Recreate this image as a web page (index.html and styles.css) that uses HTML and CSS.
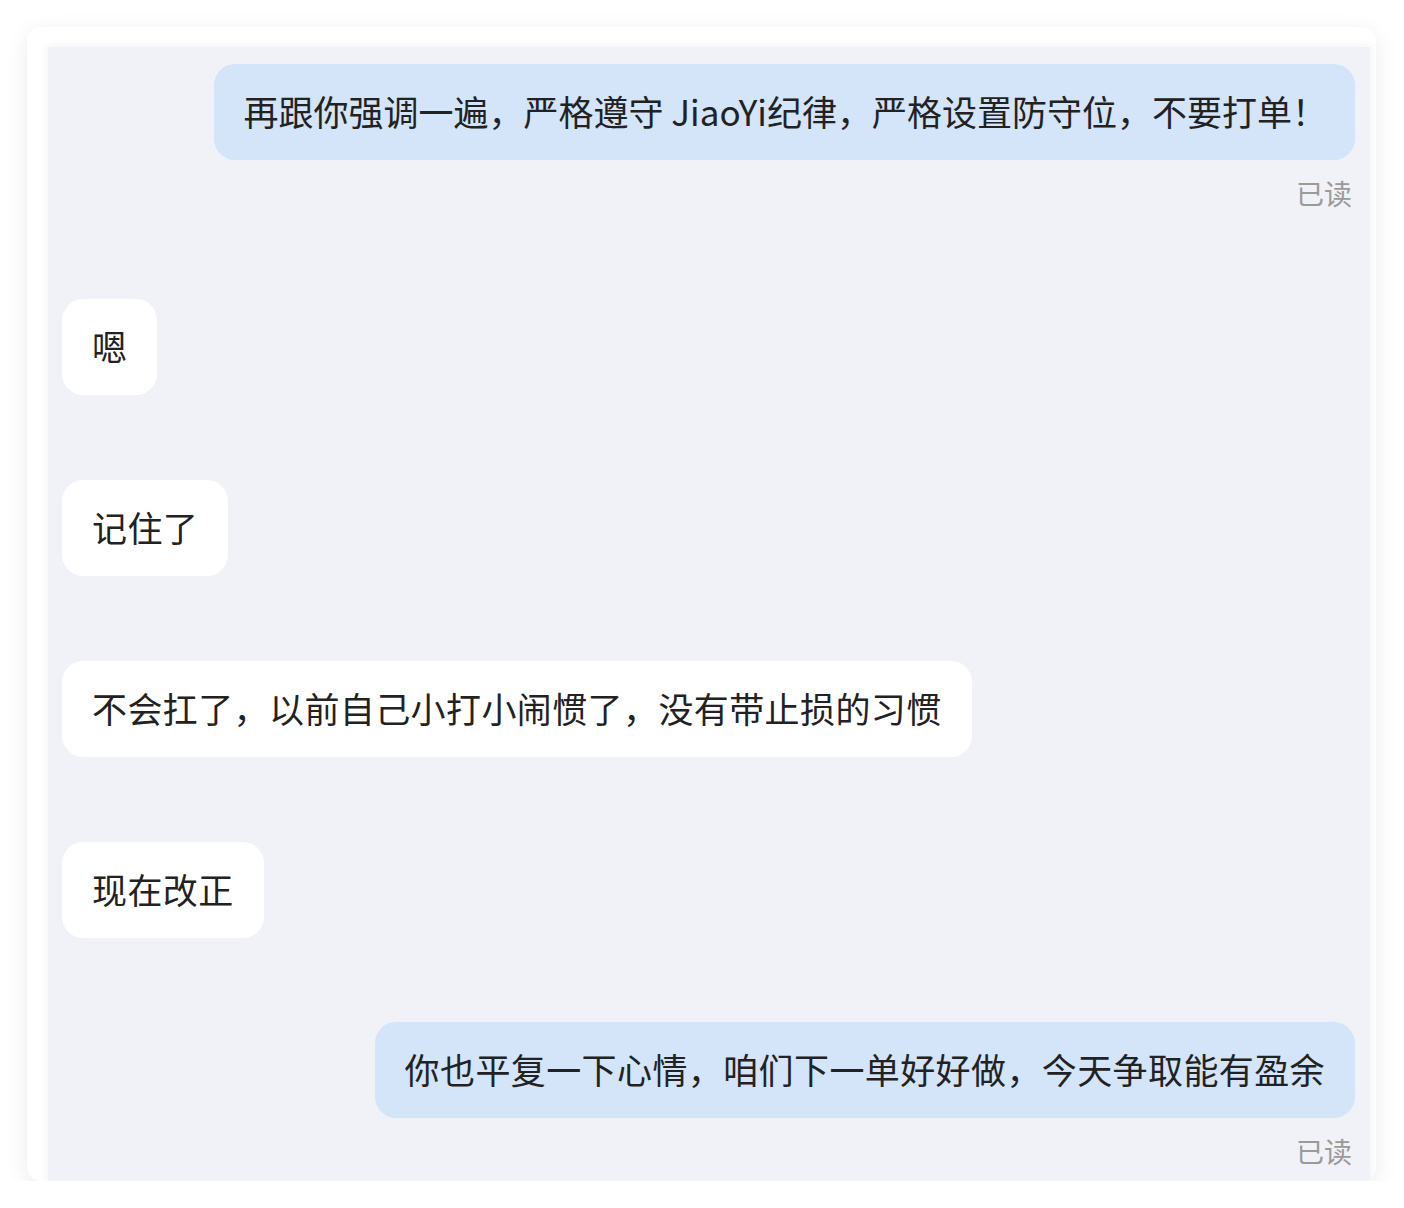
FILE: index.html
```html
<!DOCTYPE html>
<html lang="zh-CN">
<head>
<meta charset="utf-8">
<link rel="stylesheet" href="styles.css">
</head>
<body>
<div class="card">
  <div class="panel">
    <div class="row row-right">
      <div class="bubble bubble-me tight">再跟你强调一遍，严格遵守 JiaoYi纪律，严格设置防守位，不要打单！</div>
    </div>
    <div class="read">已读</div>

    <div class="row row-left first-left">
      <div class="bubble bubble-other">嗯</div>
    </div>
    <div class="row row-left gap">
      <div class="bubble bubble-other">记住了</div>
    </div>
    <div class="row row-left gap">
      <div class="bubble bubble-other">不会扛了，以前自己小打小闹惯了，没有带止损的习惯</div>
    </div>
    <div class="row row-left gap">
      <div class="bubble bubble-other">现在改正</div>
    </div>

    <div class="row row-right gap-last">
      <div class="bubble bubble-me">你也平复一下心情，咱们下一单好好做，今天争取能有盈余</div>
    </div>
    <div class="read">已读</div>
  </div>
</div>
</body>
</html>
```

FILE: styles.css
```css
html, body {
  margin: 0;
  padding: 0;
  background: #ffffff;
}

body {
  font-family: "Noto Sans CJK SC", "Noto Sans", sans-serif;
  color: #222222;
}

.card {
  margin: 27px 0 0 27px;
  width: 1349px;
  height: 1154px;
  box-sizing: border-box;
  background: #ffffff;
  border-radius: 14px;
  box-shadow: 0 6px 24px rgba(0, 0, 0, 0.08);
  padding: 20px 6px 0 21px;
  display: flex;
  overflow: hidden;
}

.panel {
  flex: 1;
  background: #f1f2f7;
  box-shadow: 0 0 8px 2px #f4f5f9;
  padding: 17px 15px 0 14px;
  display: flex;
  flex-direction: column;
}

.row {
  display: flex;
}

.row-right {
  justify-content: flex-end;
}

.row-left {
  justify-content: flex-start;
}

.first-left {
  margin-top: 89px;
}

.gap {
  margin-top: 85px;
}

.gap-last {
  margin-top: 84px;
}

.bubble {
  font-size: 35px;
  line-height: 46px;
  letter-spacing: 0.4px;
  padding: 24px 30px 26px;
  border-radius: 21px;
  white-space: nowrap;
}

.tight {
  letter-spacing: 0;
  padding-right: 28px;
}

.bubble-me {
  background: #d4e4f9;
}

.bubble-other {
  background: #ffffff;
}

.read {
  margin-top: 16px;
  align-self: flex-end;
  padding-right: 3px;
  font-size: 28px;
  line-height: 34px;
  color: #9a9a9a;
}
```
